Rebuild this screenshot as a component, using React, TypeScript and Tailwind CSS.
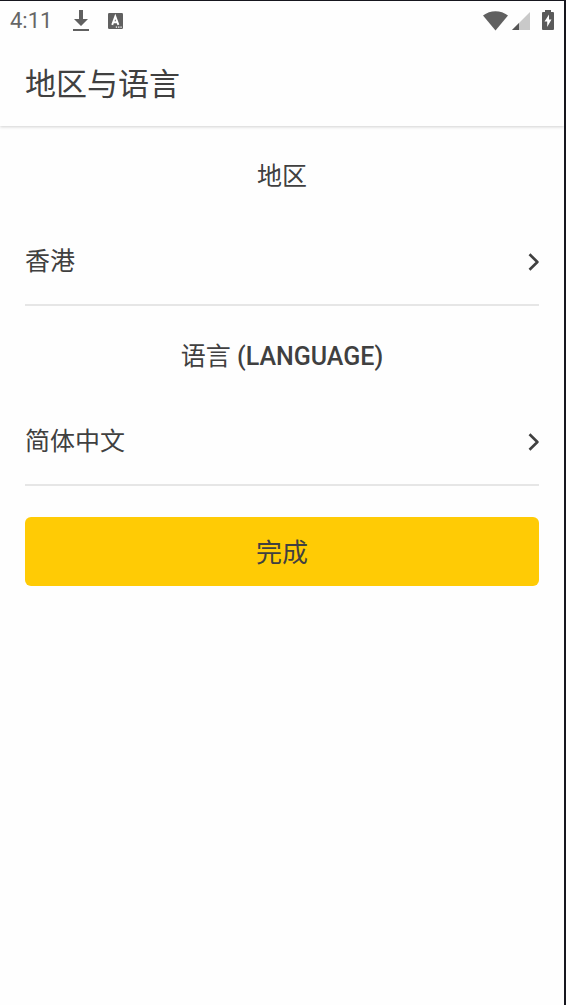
import React from "react";

function StatusBar() {
  return (
    <div className="flex h-10 items-center justify-between px-[10px] text-[#666]">
      <div className="flex items-center">
        <time className="w-[62px] text-[22px] leading-6">4:11</time>
        <svg className="mr-[18px] h-[22px] w-[18px]" viewBox="0 0 18 22" fill="#606060" aria-hidden="true">
          <path d="M7 0h4v9h5L9 16 2 9h5zM1 19h16v2H1z" />
        </svg>
        <svg className="h-[17px] w-4" viewBox="0 0 16 17" aria-hidden="true">
          <rect width="15" height="16" rx="1.200" fill="#606060" />
          <path d="M4.200 11.800 7.300 3.500 10.400 11.800M5.400 9.300h3.900" fill="none" stroke="#fff" strokeWidth="1.900" />
          <path d="M7.800 13.500h1.300v1.300H7.800zM10.100 13.500h1.300v1.300h-1.300zM12.400 13.500h1.300v1.300h-1.300z" fill="#fff" />
        </svg>
      </div>
      <div className="flex items-center">
        <svg className="mr-1 h-5 w-[25px]" viewBox="0 0 25 20" fill="#606060" aria-hidden="true">
          <path d="M0 4.500C7.300-1.300 17.700-1.300 25 4.500L12.500 19.500z" />
        </svg>
        <svg className="mr-3 h-[18px] w-[18px]" viewBox="0 0 18 18" aria-hidden="true">
          <path d="M18 0v18H0z" fill="#c9c9c9" />
          <path d="M7 11v7H0z" fill="#555" />
        </svg>
        <svg className="mb-[2px] h-5 w-3" viewBox="0 0 12 20" aria-hidden="true">
          <path d="M3 0h6v2h2q1 0 1 1v16q0 1-1 1H1q-1 0-1-1V3q0-1 1-1h2z" fill="#5a5a5a" />
          <path d="M7 4.500 2.500 11.500H5.200v5.500L9.500 9.500H7z" fill="#fff" />
        </svg>
      </div>
    </div>
  );
}

function Setting({ label, value }: { label: React.ReactNode; value: string }) {
  return (
    <section>
      <h2 className="pt-[35px] text-center text-[25px] leading-8">{label}</h2>
      <button
        type="button"
        className="mt-[23px] flex h-[90px] w-full items-center justify-between border-b-2 border-[#e6e6e6] pt-[3px] text-left text-[25px] leading-8"
      >
        <span>{value}</span>
        <svg className="h-[18px] w-[11px]" viewBox="0 0 11 18" fill="none" stroke="#404040" strokeWidth="2.600" aria-hidden="true">
          <path d="M1.500 1.200 9.400 9l-7.900 7.800" strokeLinejoin="round" />
        </svg>
      </button>
    </section>
  );
}

export default function App() {
  return (
    <div className="min-h-screen border-t border-r-2 border-[#17171f] bg-[#fefefe] font-[Roboto,'Noto_Sans_CJK_SC',sans-serif] text-[#404040]" lang="zh-CN">
      <header className="shadow-[0_1px_3px_rgba(0,0,0,0.18)]">
        <StatusBar />
        <h1 className="flex h-[85px] items-center px-[25px] pt-[3px] text-[31px] leading-10">地区与语言</h1>
      </header>
      <main className="px-[25px]">
        <Setting label="地区" value="香港" />
        <Setting label={<>语言 <span className="font-medium">(LANGUAGE)</span></>} value="简体中文" />
        <button type="button" className="mt-[31px] h-[69px] w-full rounded-md bg-[#ffcb05] pt-[2px] text-[26px] leading-8">
          完成
        </button>
      </main>
    </div>
  );
}
